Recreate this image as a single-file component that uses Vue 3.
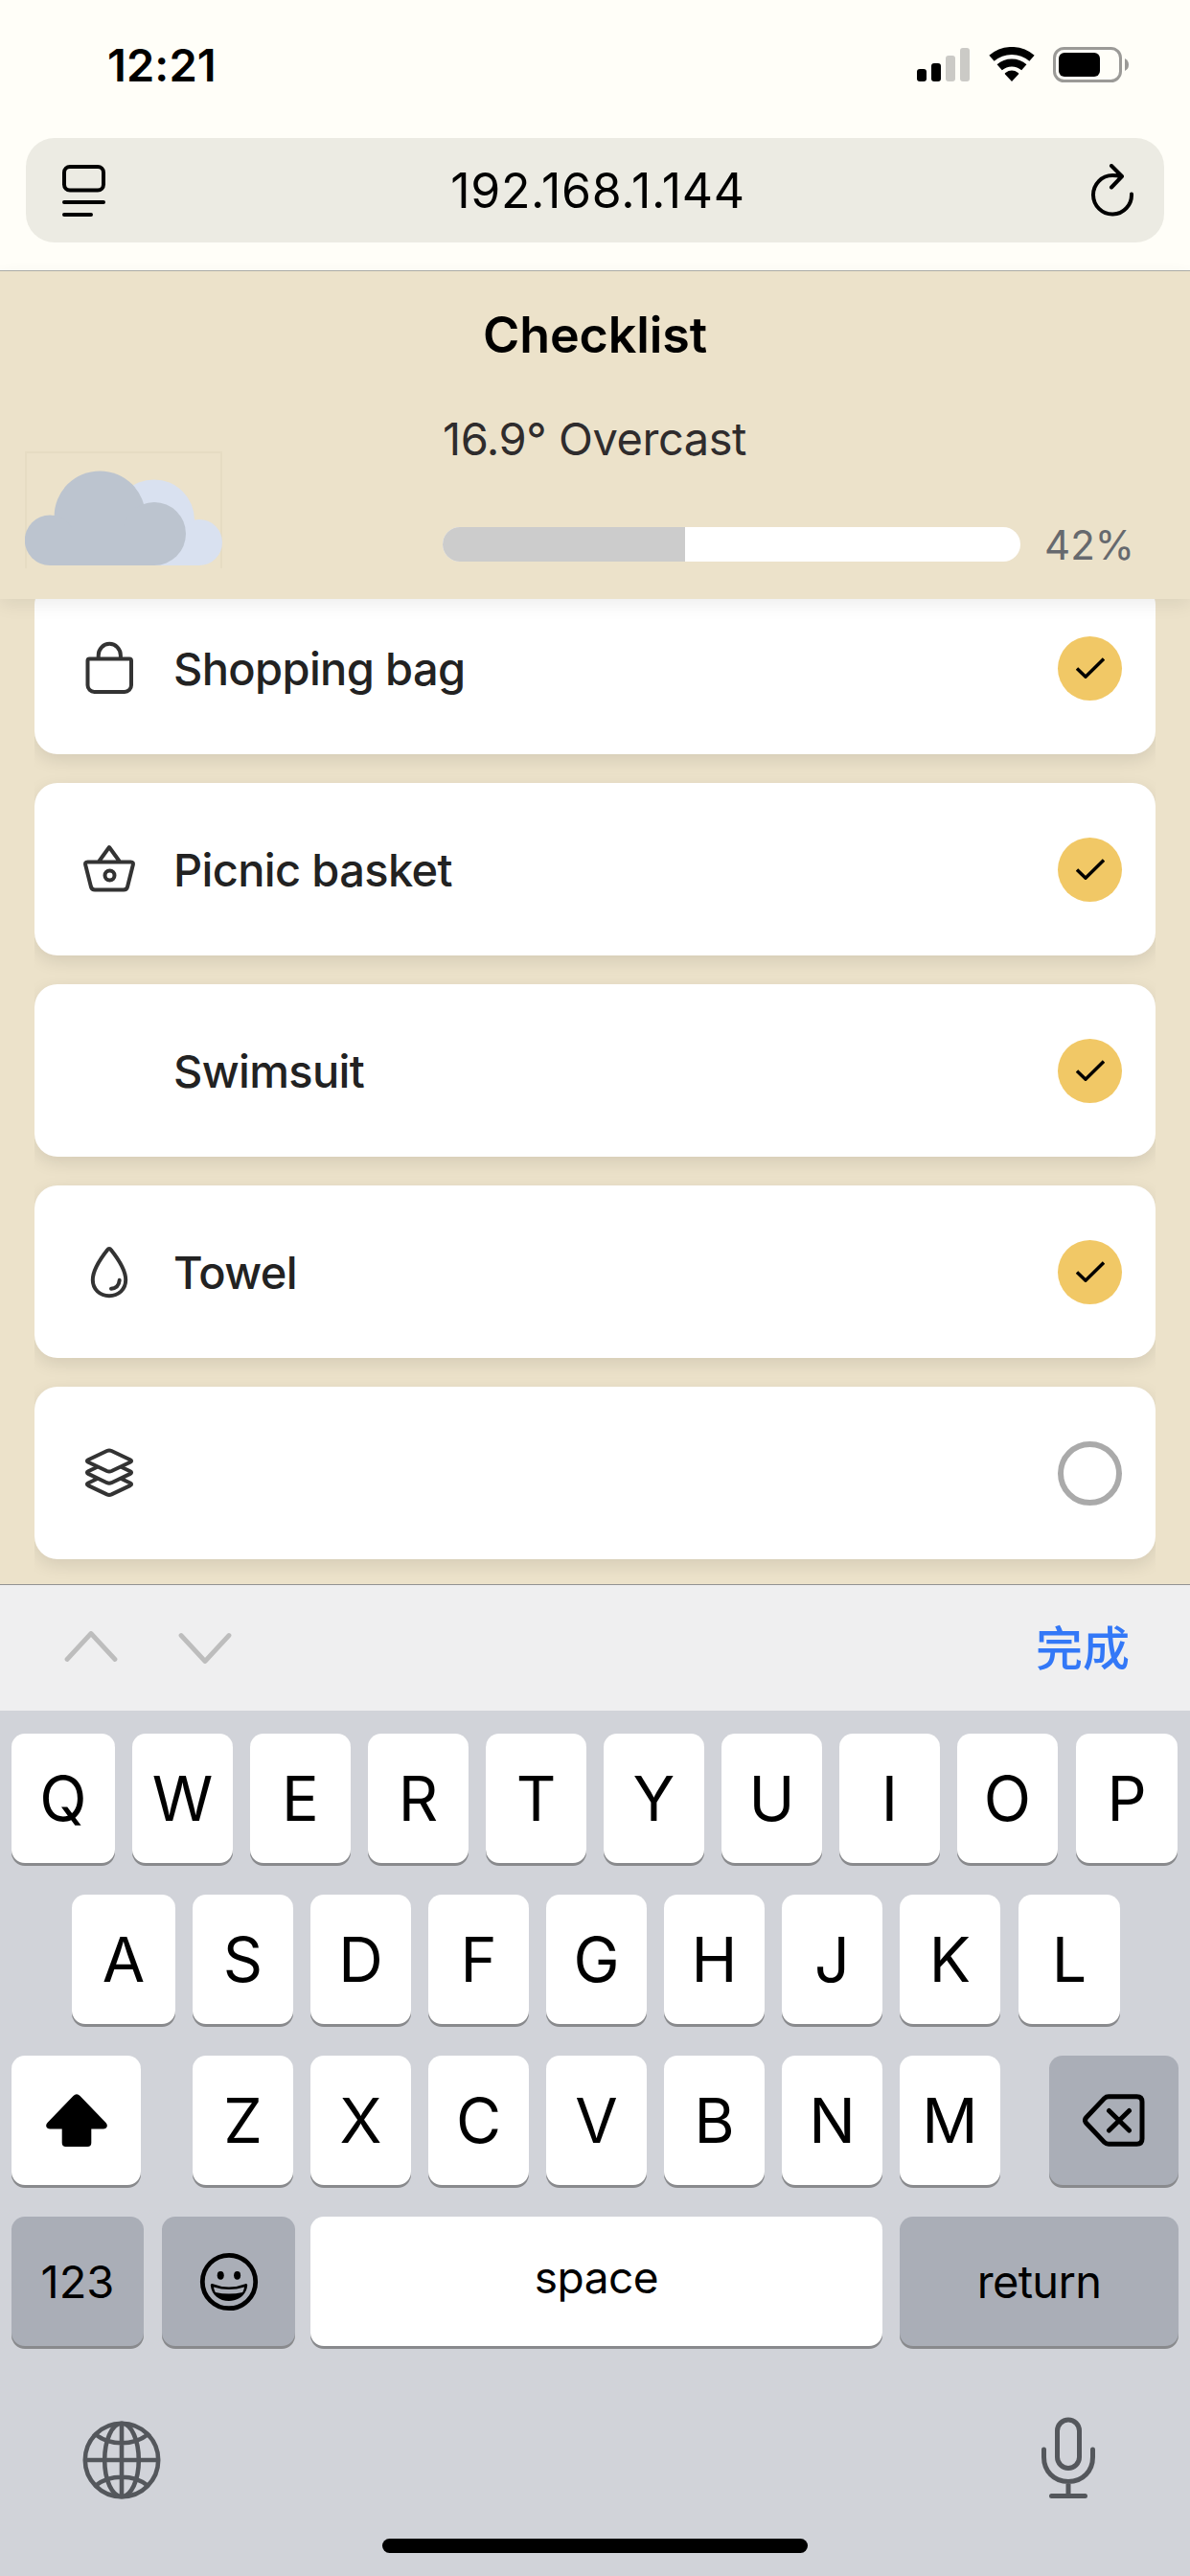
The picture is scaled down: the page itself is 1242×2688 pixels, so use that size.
<script setup>
const items = [
  { name: 'Shopping bag', icon: 'bag', checked: true },
  { name: 'Picnic basket', icon: 'basket', checked: true },
  { name: 'Swimsuit', icon: null, checked: true },
  { name: 'Towel', icon: 'drop', checked: true },
  { name: '', icon: 'layers', checked: false },
]

const progress = 42
const rowOne = [...'QWERTYUIOP']
const rowTwo = [...'ASDFGHJKL']
const rowThree = [...'ZXCVBNM']
</script>

<template>
  <div class="screen">
    <div class="browser">
      <div class="status">
        <span class="time">12:21</span>
        <div class="status-icons">
          <svg class="signal" width="55" height="37" viewBox="0 0 55 37">
            <rect x="0" y="23" width="10" height="13" rx="3" />
            <rect x="15" y="17" width="10" height="19" rx="3" />
            <rect x="30" y="9" width="10" height="27" rx="3" fill="#cbcac6" />
            <rect x="45" y="1" width="10" height="35" rx="3" fill="#cbcac6" />
          </svg>
          <svg class="wifi" width="48" height="37" viewBox="0 0 48 37">
            <path d="M3 11.8A32 32 0 0 1 45 11.8M11.2 21.3a19.5 19.5 0 0 1 25.6 0" fill="none" stroke="#000" stroke-width="8" />
            <path d="M24 36l-7-7.4q-.8-1 .3-1.7a11.500 11.500 0 0 1 13.400 0q1.100.7.3 1.700z" />
          </svg>
          <svg class="battery" width="79" height="37" viewBox="0 0 79 37">
            <rect x="1.500" y="1.500" width="69" height="34" rx="10" fill="none" stroke="#9b9a97" stroke-width="3" />
            <rect x="6" y="6" width="43" height="25" rx="6" />
            <path d="M75 12q4 2 4 6.500t-4 6.500z" fill="#9b9a97" />
          </svg>
        </div>
      </div>
      <div class="address">
        <svg width="45" height="54" viewBox="0 0 45 54" fill="none" stroke="#000" stroke-width="4" stroke-linecap="round">
          <rect x="2" y="2" width="41" height="24.500" rx="6" />
          <path d="M2 39h41M2 52h28" />
        </svg>
        <span class="url">192.168.1.144</span>
        <svg width="46" height="56" viewBox="0 0 46 56" fill="none" stroke="#000" stroke-width="4" stroke-linecap="round" stroke-linejoin="round">
          <path d="M43 31.500A20 20.300 0 1 1 23 12q5 0 9 1.200M22 2l11 11-11 11.500" />
        </svg>
      </div>
    </div>

    <header class="header">
      <h1 class="title">Checklist</h1>
      <div class="summary">
        <svg class="cloud" width="206" height="122" viewBox="0 0 206 122">
          <path d="M1 122V1h204v121" fill="none" stroke="#e6dcc3" stroke-width="2" />
          <g fill="#d9e1f0">
            <circle cx="134.800" cy="71.600" r="42.200" />
            <circle cx="182" cy="95" r="24" />
            <rect x="100" y="80" width="82" height="39" />
          </g>
          <g fill="#bcc4cf">
            <circle cx="78.200" cy="68" r="47.600" />
            <circle cx="26" cy="92.800" r="26.200" />
            <circle cx="135" cy="86" r="33" />
            <rect x="26" y="80" width="109" height="39" />
          </g>
        </svg>
        <div class="info">
          <div class="temp">16.9° Overcast</div>
          <div class="progress">
            <div class="track"><div class="fill" :style="{ width: progress + '%' }"></div></div>
            <span class="percent">{{ progress }}%</span>
          </div>
        </div>
      </div>
    </header>

    <main class="viewport">
      <ul class="list">
        <li v-for="(item, i) in items" :key="i" class="card">
          <svg class="item-icon" width="54" height="56" viewBox="0 0 54 56" fill="none" stroke="#333" stroke-width="4" stroke-linecap="round" stroke-linejoin="round">
            <path v-if="item.icon === 'bag'" d="M6.500 18.500h41.500a2 2 0 0 1 2 2V46a7 7 0 0 1-7 7h-31.500a7 7 0 0 1-7-7V20.500a2 2 0 0 1 2-2zM15.700 18V15a11.600 12.200 0 0 1 23.200 0v3" />
            <g v-else-if="item.icon === 'basket'">
              <path d="M4.500 20.500h45q3 0 2.300 3L46 46.500q-.8 3-4 3H12q-3 0-4-3L2.200 23.500q-.7-3 2.300-3zM16.500 19.500L27 5l10.500 14.500" />
              <circle cx="27.500" cy="34.500" r="5" />
            </g>
            <path v-else-if="item.icon === 'drop'" d="M27 4q1.100 0 1.900 1.300C37 15.500 44.200 27 44.200 36.500c0 10-7.600 16.700-17.200 16.700S9.800 46.500 9.800 36.500C9.800 27 17 15.500 25.100 5.300Q25.900 4 27 4zM37.700 36.800q-.7 8-8.700 9" />
            <path v-else-if="item.icon === 'layers'" d="M24.600 5q2.400-1 4.800 0l19.500 9.200q2.400 1.300 0 2.600L29.400 26q-2.400 1-4.800 0L5.100 16.800q-2.400-1.300 0-2.600zM14 22l-8.900 4.300q-2.400 1.300 0 2.600l19.500 9.300q2.400 1 4.800 0l19.500-9.300q2.400-1.300 0-2.600L40 22M14 34.200l-8.900 4.300q-2.400 1.300 0 2.600l19.500 9.300q2.400 1 4.800 0l19.500-9.300q2.400-1.300 0-2.600L40 34.200" />
          </svg>
          <span class="item-name">{{ item.name }}</span>
          <span class="check" :class="{ on: item.checked }">
            <svg v-if="item.checked" width="30" height="22" viewBox="0 0 30 22" fill="none" stroke="#000" stroke-width="3.500">
              <path d="M1 11.500l9 8.700L29 1.500" />
            </svg>
          </span>
        </li>
      </ul>
    </main>

    <div class="toolbar">
      <div class="arrows">
        <svg width="56" height="34" viewBox="0 0 56 34" fill="none" stroke="#bdbdbd" stroke-width="4.800" stroke-linecap="round" stroke-linejoin="round">
          <path d="M3 29.500L28 2.500l25 27" />
        </svg>
        <svg width="56" height="34" viewBox="0 0 56 34" fill="none" stroke="#bdbdbd" stroke-width="4.800" stroke-linecap="round" stroke-linejoin="round">
          <path d="M3 4.500l25 27 25-27" />
        </svg>
      </div>
      <span class="done">完成</span>
    </div>

    <div class="keyboard">
      <div class="row row-one">
        <div v-for="k in rowOne" :key="k" class="key letter">{{ k }}</div>
      </div>
      <div class="row row-two">
        <div v-for="k in rowTwo" :key="k" class="key letter">{{ k }}</div>
      </div>
      <div class="row row-three">
        <div class="key shift">
          <svg width="64" height="56" viewBox="0 0 64 56">
            <path d="M28.500 2Q32 -1.400 35.500 2L62.500 30q2 2.400 1 4.400t-3.500 2H47.300V51q0 4-4 4H20.700q-4 0-4-4V36.400H4q-2.500 0-3.500-2t1-4.400z" />
          </svg>
        </div>
        <div class="letters">
          <div v-for="k in rowThree" :key="k" class="key letter">{{ k }}</div>
        </div>
        <div class="key dark delete">
          <svg width="65" height="55" viewBox="0 0 65 55" fill="none" stroke="#000" stroke-width="5" stroke-linecap="round" stroke-linejoin="round">
            <path d="M27 2.700h29.500q5.500 0 5.500 5.500v38.600q0 5.500-5.500 5.500H27q-2.500 0-4.200-1.700L3.800 30.500q-2.600-3 0-6L22.800 4.400Q24.500 2.700 27 2.700zM27.500 17.500l21 20.500M48.500 17.500L27.500 38" />
          </svg>
        </div>
      </div>
      <div class="row row-four">
        <div class="key dark numbers">123</div>
        <div class="key dark emoji">
          <svg width="62" height="62" viewBox="0 0 62 62">
            <circle cx="31" cy="31" r="27.700" fill="none" stroke="#000" stroke-width="4.800" />
            <ellipse cx="22.200" cy="24.300" rx="3.500" ry="4.400" />
            <ellipse cx="39.600" cy="24.300" rx="3.500" ry="4.400" />
            <path d="M13.500 33q17.500 7 35 0 1.800-.3 1.700 1.700C49 45 41 51 31 51S13 45 11.800 34.700q-.1-2 1.700-1.700z" />
            <path d="M15 36.500q16 5 32 0-.3 3-1.800 5.500Q31 45 16.800 42 15.300 39.500 15 36.500z" fill="#aaaeb7" />
          </svg>
        </div>
        <div class="key space">space</div>
        <div class="key dark return">return</div>
      </div>
      <div class="bottom">
        <svg width="82" height="82" viewBox="0 0 82 82" fill="none" stroke="#54575c" stroke-width="4.600">
          <circle cx="41" cy="41" r="38.200" />
          <ellipse cx="41" cy="41" rx="17.800" ry="38.200" />
          <path d="M41 3v76M3 41h76M14 14.500q11 8.800 27 8.800t27-8.800M14 67.500q11-8.800 27-8.800t27 8.800" />
        </svg>
        <svg width="56" height="86" viewBox="0 0 56 86" fill="none" stroke="#54575c" stroke-width="5" stroke-linecap="round">
          <rect x="16.500" y="3" width="23" height="50.500" rx="11.500" />
          <path d="M2.500 34v8c0 14 10 25.500 25.500 25.500S53.500 56 53.500 42v-8M28 67.500V82M10.500 82.500h35" />
        </svg>
      </div>
      <div class="home"></div>
    </div>
  </div>
</template>

<style>
body {
  margin: 0;
}
</style>

<style scoped>
.screen {
  width: 1242px;
  height: 2688px;
  display: flex;
  flex-direction: column;
  overflow: hidden;
  background: #ece2ca;
  font-family: Inter, "Liberation Sans", "Noto Sans CJK SC", sans-serif;
  color: #000;
}
.screen * {
  box-sizing: border-box;
}
svg {
  display: block;
  flex: none;
}
.browser {
  height: 283px;
  flex: none;
  background: #fffef8;
  border-bottom: 1px solid #adada8;
}
.status {
  height: 135px;
  display: flex;
  align-items: center;
  justify-content: space-between;
  padding: 0 64px 0 112px;
}
.time {
  font-size: 47px;
  font-weight: 600;
  letter-spacing: 0.1px;
}
.status-icons {
  display: flex;
}
.wifi {
  margin: 0 19px 0 20px;
}
.address {
  height: 109px;
  margin: 9px 27px 0;
  padding: 0 31px 0 38px;
  display: flex;
  align-items: center;
  justify-content: space-between;
  border-radius: 30px;
  background: #ecebe3;
}
.url {
  font-size: 50px;
  letter-spacing: 0.700px;
}
.header {
  height: 342px;
  flex: none;
  position: relative;
  z-index: 1;
  background: #ece2ca;
  box-shadow: 0 6px 18px rgba(0, 0, 0, 0.07);
}
.title {
  margin: 0;
  line-height: 134px;
  text-align: center;
  font-size: 52px;
  font-weight: 600;
  letter-spacing: -0.1px;
}
.summary {
  display: flex;
  align-items: flex-start;
  padding-left: 26px;
}
.cloud {
  margin-top: 54px;
}
.info {
  margin-left: 230px;
  padding-top: 11px;
}
.temp {
  line-height: 60px;
  font-size: 47px;
  letter-spacing: -0.450px;
  color: #2f2c2d;
  white-space: nowrap;
}
.progress {
  height: 50px;
  margin-top: 55px;
  display: flex;
  align-items: center;
  gap: 25px;
}
.track {
  width: 603px;
  height: 36px;
  border-radius: 18px;
  overflow: hidden;
  background: #fff;
}
.fill {
  height: 100%;
  background: #ccc;
}
.percent {
  font-size: 42px;
  color: #66696e;
}
.viewport {
  height: 1028px;
  flex: none;
  overflow: hidden;
}
.list {
  list-style: none;
  margin: -18px 36px 0;
  padding: 0 0 30px;
  display: flex;
  flex-direction: column;
  gap: 30px;
  overflow: hidden;
}
.card {
  height: 180px;
  flex: none;
  display: flex;
  align-items: center;
  padding: 0 35px 0 51px;
  border-radius: 24px;
  background: #fff;
  box-shadow: 0 6px 18px rgba(0, 0, 0, 0.1);
}
.item-name {
  flex: 1;
  margin-left: 40px;
  padding-top: 1px;
  font-size: 47px;
  font-weight: 500;
  letter-spacing: -0.650px;
  color: #222;
}
.check {
  width: 67px;
  height: 67px;
  display: flex;
  align-items: center;
  justify-content: center;
  border: 6px solid #aaa;
  border-radius: 50%;
}
.check.on {
  border: 0;
  background: #f1c866;
}
.toolbar {
  height: 132px;
  flex: none;
  display: flex;
  align-items: center;
  justify-content: space-between;
  padding: 0 63px 2px 67px;
  border-top: 1px solid #929292;
  background: #efeff0;
}
.arrows {
  display: flex;
  gap: 63px;
}
.done {
  padding-bottom: 4px;
  font-family: "Noto Sans CJK SC", sans-serif;
  font-size: 49px;
  line-height: 60px;
  font-weight: 500;
  color: #3378f7;
}
.keyboard {
  height: 903px;
  flex: none;
  display: flex;
  flex-direction: column;
  padding: 24px 12px 0;
  background: #d1d3d9;
}
.row {
  height: 135px;
  flex: none;
  display: flex;
  gap: 18px;
  margin-bottom: 33px;
}
.row-two {
  padding: 0 61px 0 63px;
}
.row-three {
  justify-content: space-between;
  gap: 0;
}
.letters {
  display: flex;
  gap: 18px;
  margin-left: 3px;
}
.row-four {
  margin-bottom: 0;
}
.key {
  display: flex;
  align-items: center;
  justify-content: center;
  border-radius: 14px;
  background: #fff;
  box-shadow: 0 3px 0 #898a8d;
  font-size: 47px;
}
.letter {
  width: 105px;
  font-size: 64.500px;
}
.row-one .letter:first-child,
.row-two .letter:first-child {
  width: 108px;
}
.row-one .letter:last-child,
.row-two .letter:last-child {
  width: 106px;
  margin-left: 1px;
}
.dark {
  background: #aaaeb7;
}
.shift,
.delete {
  width: 135px;
}
.numbers {
  width: 138px;
}
.emoji {
  width: 139px;
  margin-left: 1px;
}
.space {
  width: 597px;
  margin-left: -2px;
  padding-bottom: 10px;
  font-size: 46px;
  letter-spacing: -0.500px;
}
.return {
  width: 291px;
  letter-spacing: -0.700px;
}
.bottom {
  margin-top: 74px;
  display: flex;
  align-items: flex-start;
  justify-content: space-between;
  padding: 0 87px 0 74px;
}
.bottom svg:first-child {
  margin-top: 4px;
}
.home {
  width: 444px;
  height: 15px;
  margin: 41px auto 0;
  border-radius: 8px;
  background: #000;
}
</style>
